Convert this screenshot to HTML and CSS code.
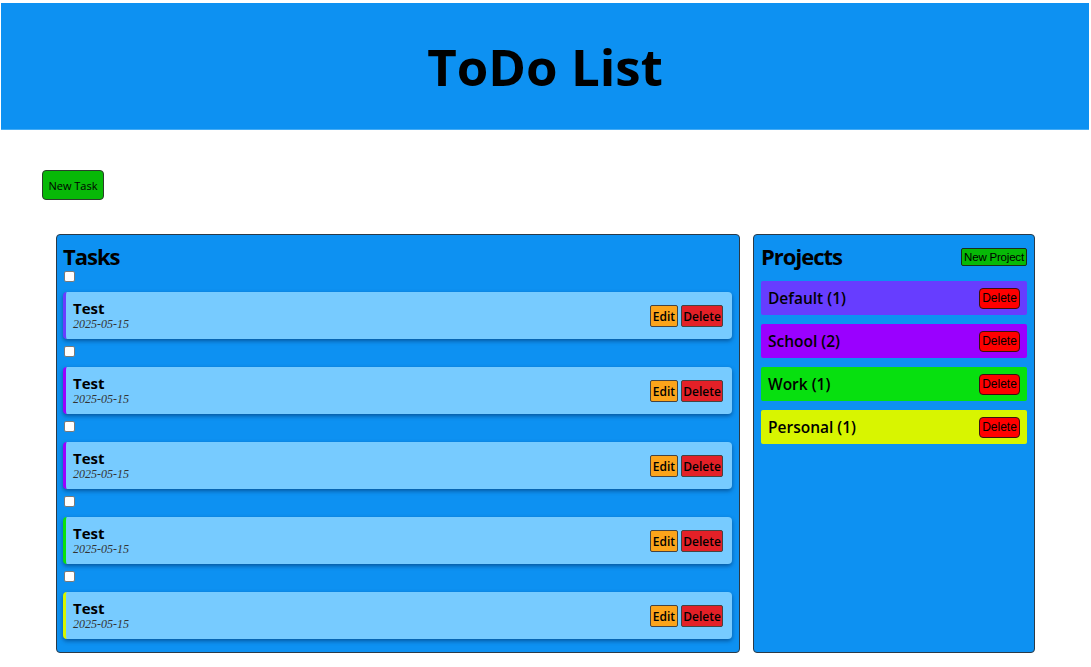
FILE: index.html
```html
<!DOCTYPE html>
<html>
<head>
<meta charset="utf-8">
<link rel="stylesheet" href="styles.css">
</head>
<body>
<header class="top">
  <h1>ToDo List</h1>
</header>
<div class="toolbar">
  <button class="btn-new-task">New Task</button>
</div>
<main class="board">
  <section class="panel tasks">
    <h2>Tasks</h2>
    <div class="task-list">
      <div class="task-wrap">
        <input type="checkbox" class="check">
        <div class="task c-default">
          <div class="task-info"><div class="task-title">Test</div><div class="task-date">2025-05-15</div></div>
          <div class="task-actions"><button class="btn-edit">Edit</button><button class="btn-del">Delete</button></div>
        </div>
      </div>
      <div class="task-wrap">
        <input type="checkbox" class="check">
        <div class="task c-school">
          <div class="task-info"><div class="task-title">Test</div><div class="task-date">2025-05-15</div></div>
          <div class="task-actions"><button class="btn-edit">Edit</button><button class="btn-del">Delete</button></div>
        </div>
      </div>
      <div class="task-wrap">
        <input type="checkbox" class="check">
        <div class="task c-school">
          <div class="task-info"><div class="task-title">Test</div><div class="task-date">2025-05-15</div></div>
          <div class="task-actions"><button class="btn-edit">Edit</button><button class="btn-del">Delete</button></div>
        </div>
      </div>
      <div class="task-wrap">
        <input type="checkbox" class="check">
        <div class="task c-work">
          <div class="task-info"><div class="task-title">Test</div><div class="task-date">2025-05-15</div></div>
          <div class="task-actions"><button class="btn-edit">Edit</button><button class="btn-del">Delete</button></div>
        </div>
      </div>
      <div class="task-wrap">
        <input type="checkbox" class="check">
        <div class="task c-personal">
          <div class="task-info"><div class="task-title">Test</div><div class="task-date">2025-05-15</div></div>
          <div class="task-actions"><button class="btn-edit">Edit</button><button class="btn-del">Delete</button></div>
        </div>
      </div>
    </div>
  </section>
  <section class="panel projects">
    <div class="proj-head">
      <h2>Projects</h2>
      <button class="btn-new-proj">New Project</button>
    </div>
    <div class="proj-list">
      <div class="project p-default"><span>Default (1)</span><button class="btn-pdel">Delete</button></div>
      <div class="project p-school"><span>School (2)</span><button class="btn-pdel">Delete</button></div>
      <div class="project p-work"><span>Work (1)</span><button class="btn-pdel">Delete</button></div>
      <div class="project p-personal"><span>Personal (1)</span><button class="btn-pdel">Delete</button></div>
    </div>
  </section>
</main>
</body>
</html>
```

FILE: styles.css
```css
* { box-sizing: border-box; }
html, body { margin: 0; padding: 0; background: #fff; }
body {
  font-family: "Open Sans", "Noto Sans", sans-serif;
  color: #000;
  padding: 3px 2px 0 1px;
}
.top {
  background: #0d91f2;
  height: 127px;
  border-bottom: 1px solid #45acf5;
  display: flex;
  align-items: center;
  justify-content: center;
}
.top h1 {
  margin: 0;
  font-size: 51px;
  font-weight: 700;
  line-height: 1;
  padding-top: 1px;
}
.toolbar {
  padding: 40px 0 0 41px;
  height: 104px;
}
button {
  font-family: "Open Sans", sans-serif;
  color: #000;
  cursor: pointer;
}
.btn-new-task {
  width: 62px;
  height: 30px;
  background: #07b907;
  border: 1px solid #2c3e2c;
  border-radius: 4px;
  font-size: 11px;
  padding: 0;
}
.board {
  display: flex;
  gap: 13px;
  padding-left: 55px;
}
.panel {
  background: #0d91f2;
  border: 1px solid #2b3a47;
  border-radius: 4px;
  height: 419px;
}
.tasks { width: 684px; padding: 8px 7px 0 6px; }
.projects { width: 282px; padding: 8px 7px 0 7px; }
.panel h2 {
  margin: 0;
  font-size: 22px;
  font-weight: 700;
  line-height: 26px;
  letter-spacing: -1px;
}
.task-list { display: flex; flex-direction: column; }
.check {
  margin: 0 0 10px 1px;
  width: 11px;
  height: 11px;
  display: block;
  appearance: none;
  -webkit-appearance: none;
  background: #fff;
  border: 1px solid #7a7a7a;
  border-radius: 2px;
}
.task-wrap { padding-bottom: 7px; }
.task-wrap:first-child .check { margin-top: 2px; }
.task {
  height: 47px;
  background: #77cbff;
  border-radius: 4px;
  border-left: 3px solid #6a3cff;
  box-shadow: 0 2px 4px rgba(0, 40, 90, 0.55);
  display: flex;
  align-items: center;
  justify-content: space-between;
  padding: 0 9px 0 7px;
}
.c-default { border-left-color: #6a3cff; }
.c-school { border-left-color: #9a00ff; }
.c-work { border-left-color: #0be10b; }
.c-personal { border-left-color: #d6f500; }
.task-title { font-size: 15px; font-weight: 700; line-height: 17px; }
.task-date {
  font-family: "Liberation Serif", serif;
  font-style: italic;
  font-size: 12px;
  color: #333;
  line-height: 14px;
}
.task-actions { display: flex; gap: 3px; margin-top: 1px; }
.btn-edit, .btn-del {
  height: 22px;
  border: 1px solid #444;
  border-radius: 2px;
  font-size: 12px;
  font-weight: 600;
  padding: 0;
}
.btn-edit { width: 28px; background: #fca41a; }
.btn-del { width: 42px; background: #e32027; }
.proj-head {
  display: flex;
  justify-content: space-between;
  align-items: center;
  margin-bottom: 12px;
  height: 26px;
}
.btn-new-proj {
  font-family: "Liberation Sans", Arial, sans-serif;
  font-size: 11.5px;
  height: 18px;
  width: 66px;
  padding: 0;
  background: #07b907;
  border: 1px solid #1a2e1a;
  border-radius: 2px;
  margin-top: 1px;
  white-space: nowrap;
  letter-spacing: -0.2px;
}
.proj-list { display: flex; flex-direction: column; gap: 9px; }
.project {
  height: 34px;
  border-radius: 2px;
  display: flex;
  align-items: center;
  justify-content: space-between;
  padding: 0 7px 0 7px;
  font-size: 15.5px;
  font-weight: 600;
}
.p-default { background: #673dff; }
.p-school { background: #9a00ff; }
.p-work { background: #07e00f; }
.p-personal { background: #d8f500; }
.btn-pdel {
  font-family: "Liberation Sans", Arial, sans-serif;
  font-size: 12px;
  width: 41px;
  height: 21px;
  padding: 0;
  background: #ff0000;
  border: 1px solid #3a1010;
  border-radius: 4px;
}
```
